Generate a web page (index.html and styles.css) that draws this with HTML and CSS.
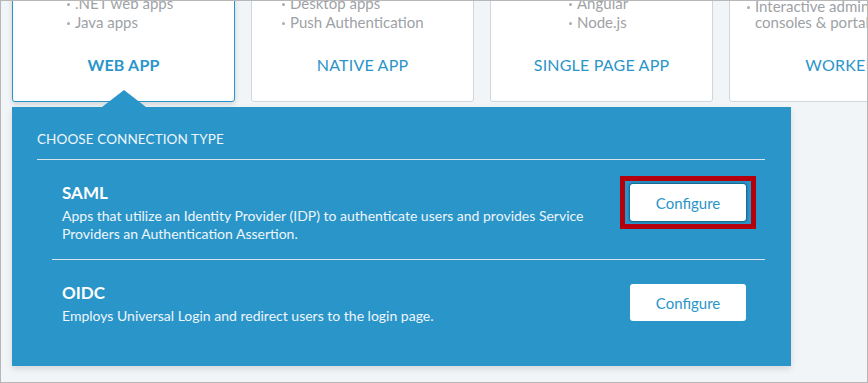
FILE: index.html
```html
<!DOCTYPE html>
<html lang="en">
<head>
<meta charset="utf-8">
<title>Choose connection type</title>
<link rel="stylesheet" href="styles.css">
</head>
<body>
<div class="frame">
  <div class="content">
    <div class="cards">
      <div class="card card--selected">
        <ul class="uses uses--web">
          <li>.NET web apps</li>
          <li>Java apps</li>
        </ul>
        <div class="card-title card-title--bold">WEB APP</div>
      </div>
      <div class="card">
        <ul class="uses uses--native">
          <li>Desktop apps</li>
          <li>Push Authentication</li>
        </ul>
        <div class="card-title">NATIVE APP</div>
      </div>
      <div class="card">
        <ul class="uses uses--spa">
          <li>Angular</li>
          <li>Node.js</li>
        </ul>
        <div class="card-title">SINGLE PAGE APP</div>
      </div>
      <div class="card">
        <ul class="uses uses--worker">
          <li>Interactive admin consoles &amp; portals</li>
        </ul>
        <div class="card-title">WORKER</div>
      </div>
    </div>

    <section class="panel">
      <h2 class="panel-title">CHOOSE CONNECTION TYPE</h2>
      <div class="options">
        <div class="option">
          <div class="option-text">
            <h3 class="option-name">SAML</h3>
            <p class="option-desc">Apps that utilize an Identity Provider (IDP) to authenticate users and provides Service Providers an Authentication Assertion.</p>
          </div>
          <button class="btn btn--highlight" type="button">Configure</button>
        </div>
        <div class="option">
          <div class="option-text">
            <h3 class="option-name">OIDC</h3>
            <p class="option-desc">Employs Universal Login and redirect users to the login page.</p>
          </div>
          <button class="btn" type="button">Configure</button>
        </div>
      </div>
    </section>
  </div>
</div>
</body>
</html>
```

FILE: styles.css
```css
* { box-sizing: border-box; }

html, body {
  margin: 0;
  padding: 0;
  background: #ffffff;
}

body {
  font-family: "Lato", "Open Sans", sans-serif;
}

.frame {
  width: 868px;
  height: 383px;
  border: 1px solid #b7b7b7;
  background: #f2f5f8;
  overflow: hidden;
}

.content {
  padding-left: 11px;
  margin-top: -60px;
}

.cards {
  display: flex;
  gap: 16px;
  width: 1000px;
}

.card {
  flex: 0 0 223px;
  height: 161px;
  background: #ffffff;
  border: 1px solid #cfd6dd;
  border-radius: 3px;
  display: flex;
  flex-direction: column;
}

.card--selected {
  border-color: #2a95c9;
  box-shadow: 0 2px 5px rgba(0, 0, 0, 0.15);
}

.uses {
  list-style: none;
  margin: 0;
  height: 88px;
  display: flex;
  flex-direction: column;
  justify-content: flex-end;
  gap: 3px;
  font-size: 15px;
  line-height: 16px;
  color: #9ea2a6;
}

.uses li {
  position: relative;
  padding-left: 8px;
}

.uses li::before {
  content: "";
  position: absolute;
  left: 0;
  top: 8px;
  width: 3px;
  height: 3px;
  border-radius: 50%;
  background: #a9adb1;
}

.uses--web { padding-left: 54px; }
.uses--native { padding-left: 30px; }
.uses--spa { padding-left: 78px; }
.uses--worker { padding-left: 17px; width: 160px; }

.card-title {
  margin-top: 25px;
  text-align: center;
  font-size: 16px;
  line-height: 20px;
  color: #2a95c9;
  letter-spacing: 0.2px;
}

.card-title--bold { font-weight: 700; }

.panel {
  position: relative;
  width: 779px;
  margin-top: 5px;
  background: #2a95c9;
  padding: 23px 26px 25px 25px;
  box-shadow: 0 3px 6px rgba(0, 0, 0, 0.12);
  color: #ffffff;
}

.panel::before {
  content: "";
  position: absolute;
  left: 90px;
  top: -17px;
  border-left: 22px solid transparent;
  border-right: 22px solid transparent;
  border-bottom: 17px solid #2a95c9;
}

.panel-title {
  margin: 0;
  padding-bottom: 11px;
  border-bottom: 1px solid #d7e2ea;
  font-size: 13.5px;
  line-height: 18px;
  font-weight: 400;
  color: #eef6fb;
  letter-spacing: 0.1px;
}

.options {
  margin-left: 15px;
}

.option {
  display: flex;
  align-items: flex-start;
  padding: 23px 19px 16px 10px;
  border-bottom: 1px solid #d7e2ea;
}

.option:last-child {
  border-bottom: none;
}

.option-text {
  flex: 1;
  margin-right: 40px;
}

.option-name {
  margin: 0 0 4px 0;
  font-size: 17px;
  line-height: 20px;
  font-weight: 700;
  color: #ffffff;
}

.option-desc {
  margin: 0;
  font-size: 14px;
  line-height: 18px;
  color: #eef6fb;
}

.btn {
  position: relative;
  flex: 0 0 116px;
  width: 116px;
  height: 37px;
  margin-top: 1px;
  border: none;
  border-radius: 3px;
  background: #ffffff;
  color: #2a95c9;
  font-family: inherit;
  font-size: 15px;
}

.btn--highlight {
  box-shadow: 0 0 2px 1px rgba(10, 60, 90, 0.6);
}

.btn--highlight::after {
  content: "";
  position: absolute;
  left: -10px;
  right: -10px;
  top: -8px;
  bottom: -8px;
  border: 5px solid #b3000c;
}
```
